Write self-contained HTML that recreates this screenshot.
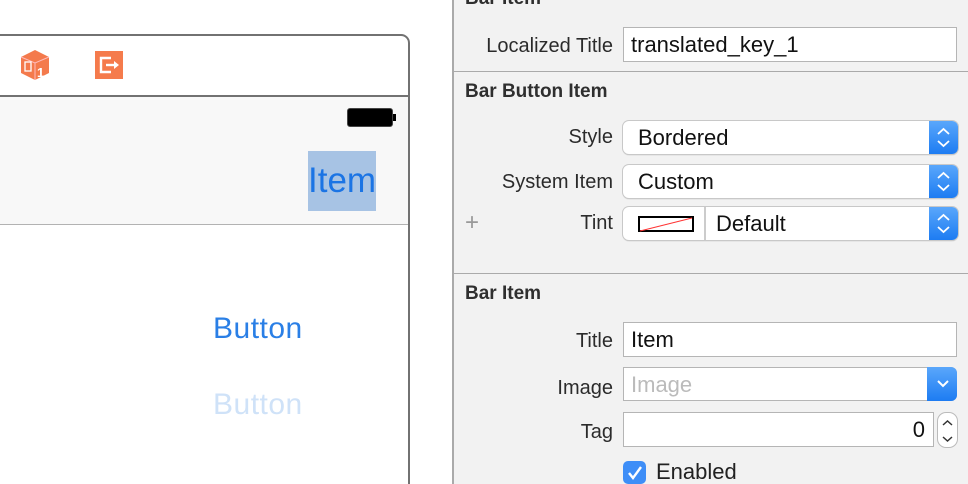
<!DOCTYPE html>
<html><head><style>
*{margin:0;padding:0;box-sizing:border-box}
html,body{width:968px;height:484px;overflow:hidden}
body{background:#fff;font-family:"Liberation Sans",sans-serif;position:relative}
.a{position:absolute}
.lbl{position:absolute;right:355px;font-size:20px;color:#2b2b2b;text-align:right;white-space:nowrap}
.fld{position:absolute;left:623px;background:#fff;border:1px solid #b5b5b5;font-size:22px;color:#111;padding-left:7px;line-height:33px}
.pop{position:absolute;left:623px;width:335px;background:#fff;border-radius:6px;box-shadow:0 0 0 1px #c8c8c8,0 1px 1px #aaa;font-size:22px;line-height:33px;padding-left:15px;color:#111}
.arr{position:absolute;right:0;top:0;width:29px;height:100%;background:linear-gradient(#5aa7fb,#1d7cf2);border-radius:0 6px 6px 0}
.h{position:absolute;left:465px;font-size:19px;font-weight:bold;color:#2f2f2f}
</style></head><body>
<div class="a" style="left:-20px;top:34px;width:430px;height:470px;border:2px solid #727272;border-radius:9px;background:#fff"></div>
<div class="a" style="left:0;top:95px;width:408px;height:2px;background:#727272"></div>
<div class="a" style="left:0;top:97px;width:408px;height:128px;background:#f8f8f8;border-bottom:1px solid #b2b2b2"></div>
<svg class="a" style="left:20px;top:49px" width="30" height="32" viewBox="0 0 30 32"><path d="M1 8 L15 1 L29 8 L29 24 L15 31 L1 24Z" fill="#f47a4c"/><path d="M1 8 L15 14 L29 8" stroke="#fbb" stroke-width="1" fill="none"/><path d="M15 14V31" stroke="#fbb"/><text x="17" y="28" font-size="13" font-weight="bold" fill="#fff" font-family="Liberation Sans">1</text><rect x="5" y="13" width="6" height="9" fill="none" stroke="#fff" stroke-width="1.3"/></svg>
<svg class="a" style="left:95px;top:51px" width="28" height="28" viewBox="0 0 28 28"><rect width="28" height="28" fill="#f57b4c"/><path d="M16 7H6v14h10" stroke="#fff" stroke-width="2.4" fill="none"/><path d="M11 14h10" stroke="#fff" stroke-width="2.4"/><path d="M19 10l5 4-5 4z" fill="#fff"/></svg>
<div class="a" style="left:347px;top:108px;width:46px;height:19px;border:1px solid #444;border-radius:3px;background:#000"></div>
<div class="a" style="left:393px;top:114px;width:3px;height:7px;background:#000"></div>
<div class="a" style="left:308px;top:151px;width:68px;height:60px;background:#a7c3e4"></div>
<div class="a" style="left:308px;top:161px;font-size:35px;color:#1b74e4">Item</div>
<div class="a" style="left:213px;top:312px;font-size:30px;color:#2a7fe6;letter-spacing:0.5px">Button</div>
<div class="a" style="left:213px;top:388px;font-size:30px;color:#cfe2f8;letter-spacing:0.5px">Button</div>
<div class="a" style="left:452px;top:0;width:516px;height:484px;background:#f2f2f2;border-left:2px solid #aaa"></div>
<div class="h" style="top:-12px">Bar Item</div>
<div class="lbl" style="top:35px">Localized Title</div>
<div class="fld" style="top:27px;width:334px;height:35px">translated_key_1</div>
<div class="a" style="left:454px;top:71px;width:514px;height:1px;background:#aaa"></div>
<div class="h" style="top:81px">Bar Button Item</div>
<div class="lbl" style="top:126px">Style</div>
<div class="pop" style="top:121px;height:33px">Bordered<div class="arr"><svg width="29" height="33"><path d="M9 13l5.5-5 5.5 5M9 20l5.5 5 5.5-5" stroke="#fff" stroke-width="1.8" fill="none"/></svg></div></div>
<div class="lbl" style="top:171px">System Item</div>
<div class="pop" style="top:165px;height:33px">Custom<div class="arr"><svg width="29" height="33"><path d="M9 13l5.5-5 5.5 5M9 20l5.5 5 5.5-5" stroke="#fff" stroke-width="1.8" fill="none"/></svg></div></div>
<div class="a" style="left:465px;top:209px;font-size:24px;color:#999">+</div>
<div class="lbl" style="top:212px">Tint</div>
<div class="pop" style="top:207px;height:33px;padding-left:93px">Default<div class="arr"><svg width="29" height="33"><path d="M9 13l5.5-5 5.5 5M9 20l5.5 5 5.5-5" stroke="#fff" stroke-width="1.8" fill="none"/></svg></div>
<div class="a" style="left:81px;top:0;width:2px;height:33px;background:#ccc"></div>
<svg class="a" style="left:15px;top:9px" width="56" height="16"><rect x="1" y="1" width="54" height="14" fill="#fff" stroke="#000" stroke-width="2"/><path d="M2 15L54 2" stroke="#f33" stroke-width="1"/></svg></div>
<div class="a" style="left:454px;top:273px;width:514px;height:1px;background:#aaa"></div>
<div class="h" style="top:283px">Bar Item</div>
<div class="lbl" style="top:330px">Title</div>
<div class="fld" style="top:322px;width:334px;height:35px">Item</div>
<div class="lbl" style="top:377px">Image</div>
<div class="fld" style="top:367px;width:334px;height:34px;color:#bbb;border-radius:0 6px 6px 0">Image<div class="arr" style="right:-1px;top:-1px;height:34px;width:30px"></div>
<svg class="a" style="right:6px;top:11px" width="14" height="10"><path d="M2 2l5 5 5-5" stroke="#fff" stroke-width="2" fill="none"/></svg></div>
<div class="lbl" style="top:421px">Tag</div>
<div class="fld" style="top:412px;width:311px;height:35px;text-align:right;padding-right:8px">0</div>
<div class="a" style="left:938px;top:413px;width:19px;height:34px;background:#fff;border-radius:8px;box-shadow:0 0 0 1px #bbb"></div>
<svg class="a" style="left:940px;top:417px" width="15" height="28"><path d="M3 8l4.5-4 4.5 4M3 20l4.5 4 4.5-4" stroke="#333" stroke-width="1.5" fill="none"/></svg>
<div class="a" style="left:623px;top:461px;width:23px;height:23px;border-radius:5px;background:#3e8ef7"></div>
<svg class="a" style="left:626px;top:464px" width="18" height="18"><path d="M3 9l4 5 8-11" stroke="#fff" stroke-width="2.4" fill="none"/></svg>
<div class="a" style="left:656px;top:459px;font-size:22px;color:#222">Enabled</div>
</body></html>
